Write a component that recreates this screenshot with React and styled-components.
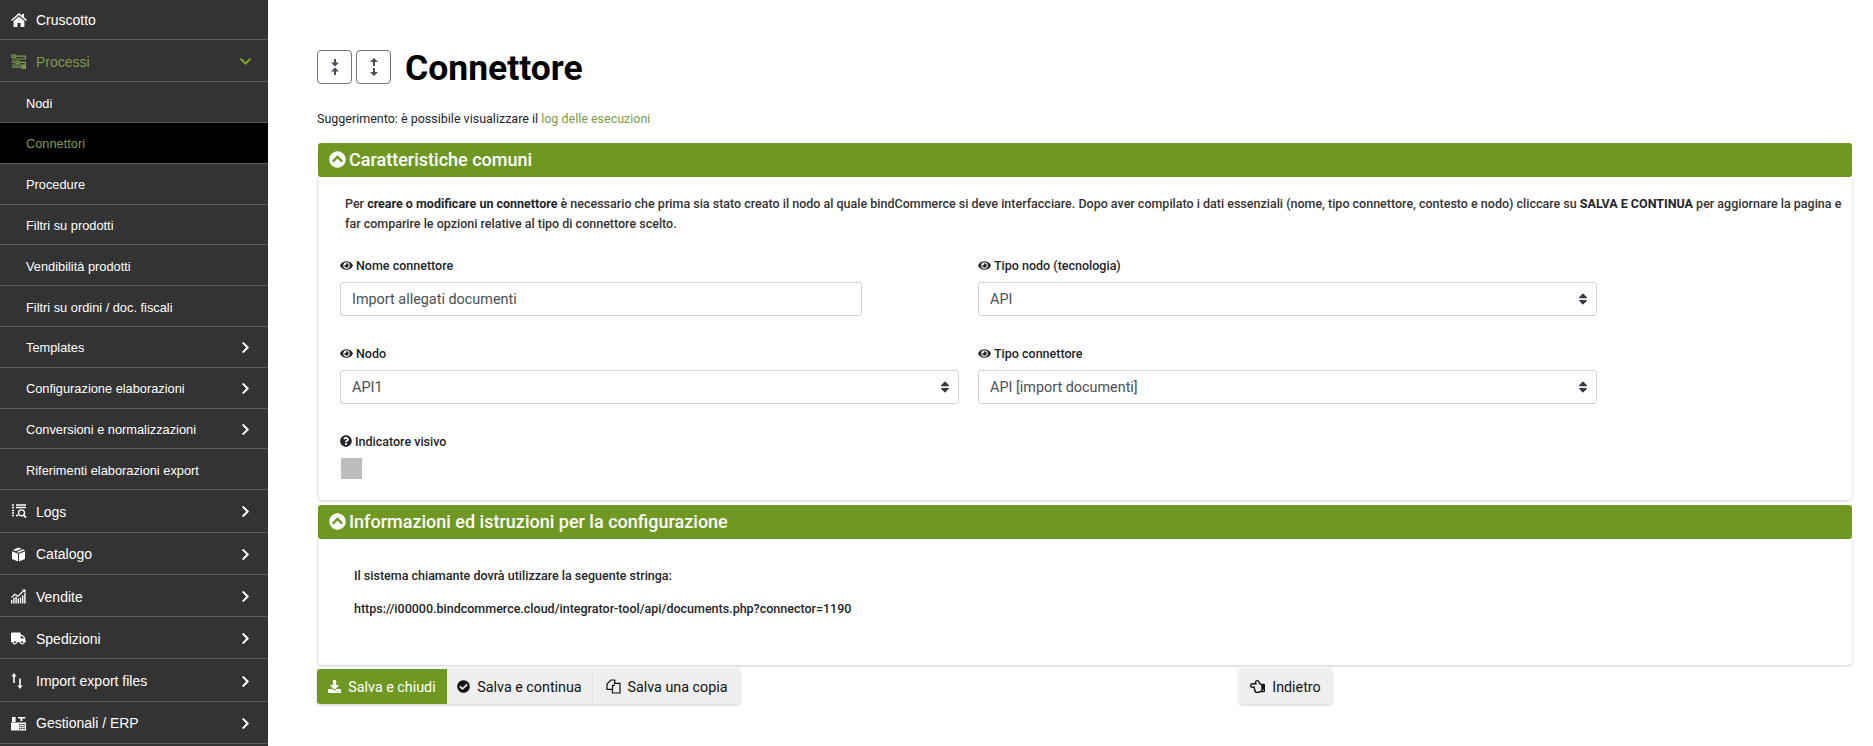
import React from "react";
import styled, { createGlobalStyle } from "styled-components";
import {
    FaChevronDown,
    FaChevronRight,
    FaTruck,
    FaEye,
    FaQuestionCircle,
    FaChevronCircleUp,
    FaDownload,
    FaCheckCircle,
    FaRegHandPointLeft,
    FaSort,
} from "react-icons/fa";

const green = "#6f9822";

const GlobalStyle = createGlobalStyle`
    html, body {
        margin: 0;
        padding: 0;
        height: 100%;
        overflow: hidden;
        background: #fff;
        font-family: "Roboto", "Liberation Sans", sans-serif;
    }
    * {
        box-sizing: border-box;
    }
`;

const Page = styled.div`
    display: flex;
    height: 746px;
    overflow: hidden;
`;

const Sidebar = styled.nav`
    flex: 0 0 268px;
    background: #333;
    font-family: "Liberation Sans", Arial, sans-serif;
    color: #fff;
`;

const MenuRow = styled.div`
    display: flex;
    align-items: center;
    height: ${p => p.$height || 42.3}px;
    padding: ${p => (p.$height ? 0 : 2)}px 16px 0 11px;
    border-bottom: 1px solid #5a5a5a;
    font-size: 14px;
    color: ${p => (p.$active ? "#7d9c4c" : "#fff")};
`;

const MenuIcon = styled.span`
    flex: 0 0 25px;
    display: flex;
    align-items: center;
    svg {
        display: block;
    }
`;

const MenuLabel = styled.span`
    flex: 1;
`;

const SubRow = styled.div`
    display: flex;
    align-items: center;
    height: 40.8px;
    padding: 2px 16px 0 26px;
    border-bottom: 1px solid #5a5a5a;
    font-size: 12.8px;
    background: ${p => (p.$current ? "#000" : "transparent")};
    color: ${p => (p.$current ? "#7d9c4c" : "#fff")};
`;

const Main = styled.main`
    flex: 1;
    min-width: 0;
    padding: 49px 21px 0 49px;
    color: #212529;
`;

const TitleRow = styled.div`
    display: flex;
    align-items: center;
    gap: 4px;
    height: 35px;
`;

const ToggleButton = styled.button`
    width: 35px;
    height: 34px;
    padding: 0;
    display: flex;
    align-items: center;
    justify-content: center;
    background: #fff;
    border: 1px solid #6c757d;
    border-radius: 4px;
    color: #495057;
`;

const Title = styled.h1`
    align-self: flex-start;
    margin: 2px 0 0 10px;
    font-size: 35.5px;
    font-weight: 700;
    line-height: 35px;
    color: #000;
`;

const Hint = styled.p`
    margin: 27px 0 0;
    height: 16px;
    font-size: 12.5px;
    line-height: 16px;
    color: #212529;
    a {
        color: #7d9c4c;
        text-decoration: none;
    }
`;

const Panel = styled.section`
    margin-top: ${p => p.$top}px;
    padding-left: 1px;
`;

const PanelHead = styled.h2`
    display: flex;
    align-items: center;
    gap: 3px;
    margin: 0;
    height: 34px;
    padding: 0 0 1px 11px;
    background: ${green};
    border-radius: 3px;
    color: #fff;
    font-size: 18px;
    font-weight: 500;
`;

const PanelBody = styled.div`
    height: ${p => p.$height}px;
    border-left: 1px solid #f2f2f2;
    border-radius: 0 0 4px 4px;
    box-shadow: 0 1px 3px rgba(0, 0, 0, 0.2);
    padding: ${p => p.$pad};
`;

const Intro = styled.p`
    margin: 0;
    padding-left: 5px;
    font-size: 12.5px;
    font-weight: 500;
    line-height: 19.5px;
    color: #333;
    white-space: nowrap;
    b {
        font-weight: 700;
        color: #212529;
    }
`;

const FormRow = styled.div`
    display: flex;
    gap: 19px;
    margin-top: ${p => p.$top}px;
`;

const Field = styled.div`
    flex: 0 0 619px;
`;

const Label = styled.label`
    display: flex;
    align-items: center;
    gap: 3px;
    height: 16px;
    margin-bottom: 9px;
    font-size: 12.5px;
    font-weight: 500;
    color: #212529;
`;

const TextInput = styled.input`
    display: block;
    width: 522px;
    height: 34px;
    padding: 0 11px;
    border: 1px solid #ced4da;
    border-radius: 3px;
    font: 400 14.4px "Roboto", sans-serif;
    color: #495057;
`;

const SelectBox = styled.div`
    position: relative;
    svg {
        position: absolute;
        right: 7px;
        top: 10px;
        color: #343a40;
    }
`;

const Select = styled.select`
    display: block;
    width: 100%;
    height: 34px;
    padding: 0 11px;
    appearance: none;
    background: #fff;
    border: 1px solid #ced4da;
    border-radius: 3px;
    font: 400 14.4px "Roboto", sans-serif;
    color: #495057;
`;

const Swatch = styled.div`
    width: 21px;
    height: 21px;
    margin-left: 1px;
    background: #bdbdbd;
`;

const InfoLine = styled.p`
    margin: 0 0 15px;
    font-size: 12.5px;
    font-weight: 500;
    line-height: 18px;
    color: #212529;
`;

const Toolbar = styled.div`
    display: flex;
    margin-top: 4px;
`;

const ButtonGroup = styled.div`
    display: flex;
    border-radius: 3px;
    box-shadow: 0 1px 3px rgba(0, 0, 0, 0.2);
    margin-left: ${p => p.$left || 0}px;
`;

const ActionButton = styled.button`
    display: flex;
    align-items: center;
    justify-content: center;
    gap: 7px;
    width: ${p => p.$width}px;
    height: 35px;
    padding: 0;
    border: 0;
    border-right: ${p => (p.$divider ? "1px solid #e2e2e2" : "0")};
    border-radius: ${p => p.$radius || "0"};
    background: ${p => (p.$primary ? green : "#efefef")};
    color: ${p => (p.$primary ? "#fff" : "#111")};
    font: 400 14.3px "Roboto", sans-serif;
`;

const HomeIcon = () => (
    <svg width="16" height="14" viewBox="0 0 16 14" fill="currentColor">
        <path d="M8 0l3 2.6V1h2v3.3L16 7l-1 1.1L8 2 1 8.1 0 7z" />
        <path d="M8 3.4l5.4 4.7V14H9.6v-4H6.4v4H2.6V8.1z" />
    </svg>
);

const ProcessIcon = () => (
    <svg width="16" height="15" viewBox="0 0 16 15" fill="none" stroke="currentColor" strokeWidth="1.2">
        <rect x="1" y="1" width="3" height="2.4" />
        <path d="M4 2.2h10.4v2.8H3M2 5v3.4h2" />
        <rect x="5" y="7.2" width="3" height="2.4" />
        <path d="M8 8.4h7M14.4 8.4v2.6H2v2.2h8" />
        <rect x="11" y="11.8" width="3.4" height="2.4" fill="currentColor" />
    </svg>
);

const LogsIcon = () => (
    <svg width="16" height="15" viewBox="0 0 16 15" fill="none" stroke="currentColor">
        <path d="M1 1h2M5 1h10M1 3.5h2M5 3.5h10M1 6.5h2M1 9h2M1 11.5h2M5 11.5h2" strokeWidth="1.3" />
        <circle cx="10.5" cy="8.8" r="3" strokeWidth="1.3" />
        <path d="M12.6 11l2.4 2.6" strokeWidth="1.6" />
    </svg>
);

const BoxIcon = () => (
    <svg width="15" height="15" viewBox="0 0 15 15" fill="currentColor">
        <path d="M7.5 .5l3 1.2-5.7 2.4-2.9-1.2zM11.8 2.2l2.2.9-6.4 2.7-2-.8zM1 4.2l6 2.5v7.8L1 12zM14 4.2V12l-6 2.5V6.7z" />
    </svg>
);

const ChartIcon = () => (
    <svg width="15" height="15" viewBox="0 0 15 15" fill="currentColor">
        <path d="M0 14.5V11h1.4v3.5zM2.2 14.5V8.6h1.4v5.9zM4.4 14.5V7.4h1.4v7.1zM6.6 14.5V9.4h1.4v5.1zM8.8 14.5V8.4h1.4v6.1zM11 14.5V6.2h1.4v8.3zM13.2 14.5V4h1.4v10.5z" />
        <path d="M.4 8.4l3.4-3.2 3.2 2 5.6-5.4" fill="none" stroke="currentColor" strokeWidth="1.2" />
        <path d="M11 .6h3.6v3.6z" />
    </svg>
);

const TransferIcon = () => (
    <svg width="12" height="16" viewBox="0 0 12 16" fill="currentColor">
        <path d="M3 0l2.6 3.6H3.8V10H2.2V3.6H.4zM8.2 5.4h1.6v7h1.8L9 16l-2.6-3.6h1.8z" />
    </svg>
);

const RegisterIcon = () => (
    <svg width="15" height="15" viewBox="0 0 15 15" fill="currentColor">
        <path d="M1 1h3.6v1.6H1zM7 1h7.4v1.6H7zM9.4 2.6h2V5h-2zM1 2.6h3.6V6H1zM0 6.4h15v8.1H0z" />
        <path d="M8 8h1.4v1.2H8zM10.2 8h1.4v1.2h-1.4zM12.4 8h1.4v1.2h-1.4zM8 10h1.4v1.2H8zM10.2 10h1.4v1.2h-1.4zM12.4 10h1.4v1.2h-1.4zM8 12h1.4v1.2H8zM10.2 12h1.4v1.2h-1.4zM12.4 12h1.4v1.2h-1.4z" fill="#333" />
    </svg>
);

const CompressIcon = () => (
    <svg width="8" height="16" viewBox="0 0 8 16" fill="currentColor">
        <path d="M3 0h2v3.4h3L4 7.4 0 3.4h3zM4 8.6l4 4H5V16H3v-3.4H0z" />
    </svg>
);

const ExpandIcon = () => (
    <svg width="8" height="18" viewBox="0 0 8 18" fill="currentColor">
        <path d="M4 0l4 4H5v4H3V4H0zM3 10h2v4h3l-4 4-4-4h3z" />
    </svg>
);

const CopyIcon = () => (
    <svg width="15" height="15" viewBox="0 0 15 15" fill="none" stroke="currentColor" strokeWidth="1.2">
        <path d="M5 1h3.6v3.4H14v9.6H6.4V10.4" />
        <path d="M5 1L1 5v5.4h5.6V6.4H9" />
        <path d="M8.6 1v3.4" />
    </svg>
);

const menuBottom = [
    { label: "Logs", icon: <LogsIcon /> },
    { label: "Catalogo", icon: <BoxIcon /> },
    { label: "Vendite", icon: <ChartIcon /> },
    { label: "Spedizioni", icon: <FaTruck size={15} /> },
    { label: "Import export files", icon: <TransferIcon /> },
    { label: "Gestionali / ERP", icon: <RegisterIcon /> },
];
const subMenu = [
    { label: "Nodi" },
    { label: "Connettori", current: true },
    { label: "Procedure" },
    { label: "Filtri su prodotti" },
    { label: "Vendibilità prodotti" },
    { label: "Filtri su ordini / doc. fiscali" },
    { label: "Templates", more: true },
    { label: "Configurazione elaborazioni", more: true },
    { label: "Conversioni e normalizzazioni", more: true },
    { label: "Riferimenti elaborazioni export" },
];

const SelectField = ({ label, value }) => (
    <Field>
        <Label>
            <FaEye size={13} />
            {label}
        </Label>
        <SelectBox>
            <Select defaultValue={value}>
                <option>{value}</option>
            </Select>
            <FaSort size={14} />
        </SelectBox>
    </Field>
);

const App = () => (
    <Page>
        <GlobalStyle />
        <Sidebar>
            <MenuRow $height={40}>
                <MenuIcon>
                    <HomeIcon />
                </MenuIcon>
                <MenuLabel>Cruscotto</MenuLabel>
            </MenuRow>
            <MenuRow $active>
                <MenuIcon>
                    <ProcessIcon />
                </MenuIcon>
                <MenuLabel>Processi</MenuLabel>
                <FaChevronDown size={13} color="#7ba428" />
            </MenuRow>
            {subMenu.map(item => (
                <SubRow key={item.label} $current={item.current}>
                    <MenuLabel>{item.label}</MenuLabel>
                    {item.more && <FaChevronRight size={13} />}
                </SubRow>
            ))}
            {menuBottom.map(item => (
                <MenuRow key={item.label}>
                    <MenuIcon>{item.icon}</MenuIcon>
                    <MenuLabel>{item.label}</MenuLabel>
                    <FaChevronRight size={13} />
                </MenuRow>
            ))}
        </Sidebar>
        <Main>
            <TitleRow>
                <ToggleButton>
                    <CompressIcon />
                </ToggleButton>
                <ToggleButton>
                    <ExpandIcon />
                </ToggleButton>
                <Title>Connettore</Title>
            </TitleRow>
            <Hint>
                Suggerimento: è possibile visualizzare il <a href="#log">log delle esecuzioni</a>
            </Hint>
            <Panel $top={16}>
                <PanelHead>
                    <FaChevronCircleUp size={17} />
                    Caratteristiche comuni
                </PanelHead>
                <PanelBody $height={323} $pad="17px 0 0 21px">
                    <Intro>
                        Per <b>creare o modificare un connettore</b> è necessario che prima sia stato creato il nodo al
                        quale bindCommerce si deve interfacciare. Dopo aver compilato i dati essenziali (nome, tipo
                        connettore, contesto e nodo) cliccare su <b>SALVA E CONTINUA</b> per aggiornare la pagina e
                        <br />
                        far comparire le opzioni relative al tipo di connettore scelto.
                    </Intro>
                    <FormRow $top={24}>
                        <Field>
                            <Label>
                                <FaEye size={13} />
                                Nome connettore
                            </Label>
                            <TextInput defaultValue="Import allegati documenti" />
                        </Field>
                        <SelectField label="Tipo nodo (tecnologia)" value="API" />
                    </FormRow>
                    <FormRow $top={29}>
                        <SelectField label="Nodo" value="API1" />
                        <SelectField label="Tipo connettore" value="API [import documenti]" />
                    </FormRow>
                    <FormRow $top={29}>
                        <Field>
                            <Label>
                                <FaQuestionCircle size={12} />
                                Indicatore visivo
                            </Label>
                            <Swatch />
                        </Field>
                    </FormRow>
                </PanelBody>
            </Panel>
            <Panel $top={5}>
                <PanelHead>
                    <FaChevronCircleUp size={17} />
                    Informazioni ed istruzioni per la configurazione
                </PanelHead>
                <PanelBody $height={126} $pad="28px 0 0 35px">
                    <InfoLine>Il sistema chiamante dovrà utilizzare la seguente stringa:</InfoLine>
                    <InfoLine>https://i00000.bindcommerce.cloud/integrator-tool/api/documents.php?connector=1190</InfoLine>
                </PanelBody>
            </Panel>
            <Toolbar>
                <ButtonGroup>
                    <ActionButton $primary $width={130} $radius="3px 0 0 3px">
                        <FaDownload size={13} />
                        Salva e chiudi
                    </ActionButton>
                    <ActionButton $width={146} $divider>
                        <FaCheckCircle size={13} />
                        Salva e continua
                    </ActionButton>
                    <ActionButton $width={147} $radius="0 3px 3px 0">
                        <CopyIcon />
                        Salva una copia
                    </ActionButton>
                </ButtonGroup>
                <ButtonGroup $left={499}>
                    <ActionButton $width={93} $radius="3px">
                        <FaRegHandPointLeft size={15} />
                        Indietro
                    </ActionButton>
                </ButtonGroup>
            </Toolbar>
        </Main>
    </Page>
);

export default App;
